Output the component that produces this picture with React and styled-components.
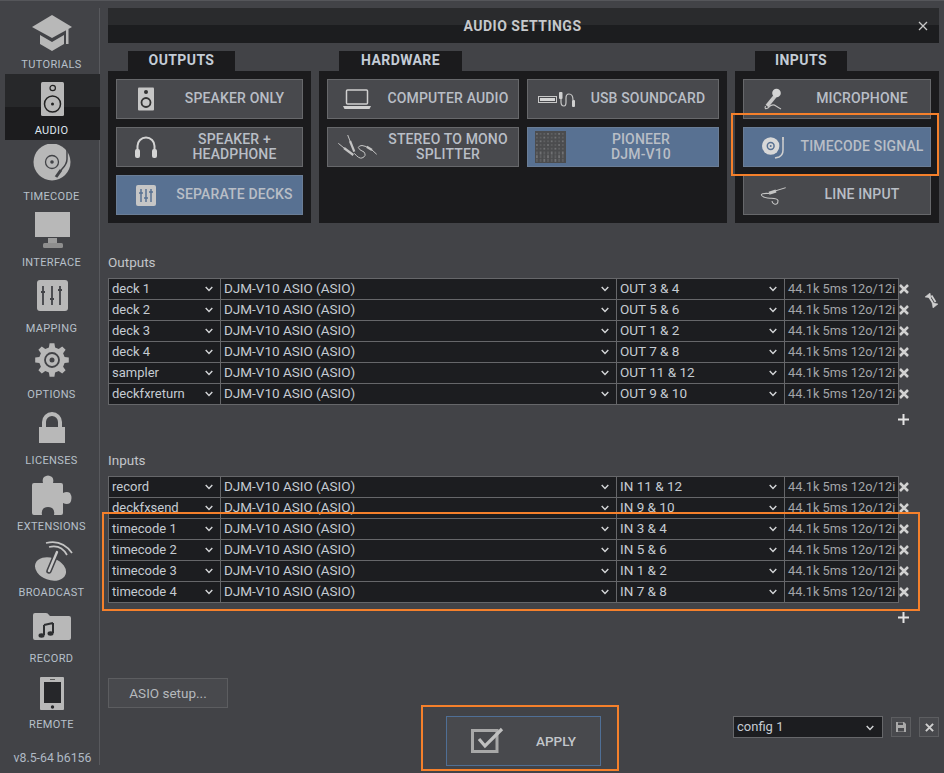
import React from "react";
import styled, { createGlobalStyle } from "styled-components";

const Global = createGlobalStyle`
  html, body { margin: 0; padding: 0; background: #424347; height: 773px; overflow: hidden; }
  body { font-family: Roboto, "Liberation Sans", sans-serif; }
  * { box-sizing: border-box; }
`;

const Page = styled.div`
  display: flex; width: 944px; height: 773px; background: #424347; border-top: 1px solid #55565a;
`;
const Sidebar = styled.nav`
  display: flex; flex-direction: column; width: 100px; height: 757px; margin-top: 7px; padding-left: 5px;
  border-right: 1px solid #58595d;
`;
const NavItem = styled.div`
  height: 66px; padding-top: 4px; margin-right: -1px; display: flex; flex-direction: column; align-items: center; flex: none;
  background: ${p => (p.$active ? "linear-gradient(#27282a 50%, #1c1c1e 50%)" : "transparent")};
`;
const NavIcon = styled.svg`
  width: 44px; height: 44px; flex: none; display: block; margin-left: -1px; fill: ${p => p.$c || "#b8b8b8"};
`;
const NavLabel = styled.span`
  font-size: 11px; line-height: 18px; color: ${p => (p.$active ? "#dfe6ee" : "#b7c0ca")}; margin-left: -2px; letter-spacing: .35px;
`;
const Version = styled.div`
  margin-top: auto; margin-left: 1px; text-align: center; font-size: 12.3px; line-height: 16px; color: #b0bac5; transform: translateY(1px);
`;
const Main = styled.main`
  margin-left: 8px; width: 831px; padding-top: 7px; display: flex; flex-direction: column;
`;
const TitleBar = styled.header`
  display: grid; grid-template-columns: 1fr auto 1fr; align-items: center; height: 35px;
  background: linear-gradient(#2a2b2d 50%, #1c1d1f 50%);
`;
const Title = styled.h1`
  grid-column: 2; margin: 0; font-size: 14px; font-weight: 700; color: #c6c8cb; letter-spacing: .5px; transform: translateX(-1px);
`;
const CloseWrap = styled.div`
  justify-self: end; padding-right: 11px; display: flex;
`;
const Panels = styled.section`
  display: grid; grid-template-columns: 203px 408px 204px; gap: 8px; margin-top: 8px;
`;
const Group = styled.div`
  position: relative;
`;
const Tab = styled.div`
  margin-left: 20px; width: ${p => p.$w}px; height: 20px; background: #1b1b1d; text-align: center;
  font-size: 14px; font-weight: 700; line-height: 18px; color: #c4ccd6; letter-spacing: .4px;
`;
const Panel = styled.div`
  display: grid; grid-template-columns: repeat(${p => p.$cols}, 1fr); grid-auto-rows: 40px; gap: 8px; padding: 8px;
  height: 152px; background: #1b1b1d;
`;
const Btn = styled.div`
  display: flex; align-items: center; height: 40px;
  background: ${p => (p.$on ? "#587192" : "#48494d")};
  border: 1px solid ${p => (p.$on ? "#6a7d96" : "#67686b")};
`;
const BtnSlot = styled.div`
  flex: none; width: ${p => p.$w || 50}px; padding-left: 7px; display: flex;
`;
const BtnIcon = styled.svg`
  flex: none; display: block; width: 44px; height: 36px; fill: #c6c6c6;
`;
const BtnLabel = styled.div`
  flex: 1; text-align: center; font-size: 14px; font-weight: 500; line-height: 15px; color: #b9bec6; letter-spacing: .15px;
  transform: translateY(${p => (p.$two ? 0 : -1)}px);
`;
const Mark = styled.div`
  position: absolute; border: 2px solid #f5802b; pointer-events: none;
  left: ${p => p.$l}px; top: ${p => p.$t}px; width: ${p => p.$w}px; height: ${p => p.$h}px;
`;
const Section = styled.section`
  position: relative; margin-top: ${p => p.$mt || 0}px;
`;
const SectionLabel = styled.div`
  font-size: 13.5px; line-height: 16px; color: #c2c5c9; margin-bottom: 8px;
`;
const TableBody = styled.div`
  display: flex; align-items: flex-start;
`;
const Table = styled.div`
  width: 810px;
`;
const Row = styled.div`
  display: grid; grid-template-columns: 112px 396px 168px 114px 20px; height: 21px;
`;
const Cell = styled.div`
  display: flex; align-items: center; justify-content: space-between; height: 22px; margin-right: -1px;
  background: #1c1d20; border: 1px solid #66676a;
  padding: 0 7px 2px 3px; line-height: 19px; white-space: nowrap; overflow: hidden;
  font-size: ${p => p.$size || 13.5}px;
  color: ${p => (p.$dim ? "#a3a5a8" : "#c5cbd2")};
`;
const Chevron = styled.svg`
  flex: none; width: 8px; height: 6px; margin-top: 2px; fill: none; stroke: #d4d6d8; stroke-width: 1.4;
`;
const RemoveBtn = styled.div`
  display: flex; align-items: center; height: 22px; padding-left: 1px;
`;
const Glyph = styled.svg`
  display: block; flex: none; width: ${p => p.$s || 10}px; height: ${p => p.$s || 10}px; fill: none;
  stroke: ${p => p.$c || "#d6d6d6"}; stroke-width: ${p => p.$sw || 2.2};
`;
const SwapIcon = styled.svg`
  flex: none; width: 14px; height: 15px; margin: 15px 0 0 7px; fill: #d0d0d0; stroke: #d0d0d0;
`;
const AddRow = styled.div`
  height: ${p => p.$h}px; padding: 10px 0 0 790px;
`;
const Footer = styled.footer`
  display: flex; align-items: flex-start;
`;
const SetupBtn = styled.div`
  width: 120px; height: 30px; padding-bottom: 1px; border: 1px solid #5c5d60; background: #48494d; color: #b6b9bd; font-size: 13.5px;
  display: flex; align-items: center; justify-content: center;
`;
const ApplyFrame = styled.div`
  margin: 27px 0 0 193px; width: 198px; height: 66px; border: 2px solid #f5802b; padding: 9px 16px 0 23px;
`;
const ApplyBtn = styled.div`
  display: flex; align-items: center; width: 155px; height: 50px; background: #48494d; border: 1px solid #4f6f96;
`;
const ApplyIcon = styled.svg`
  flex: none; width: 36px; height: 28px; margin-left: 24px; fill: none;
`;
const ApplyText = styled.span`
  margin-left: 29px; font-size: 13.5px; font-weight: 500; color: #c2c6cb;
`;
const Config = styled.div`
  margin: 38px 0 0 auto; display: flex; align-items: flex-start;
`;
const ConfigSelect = styled.div`
  width: 150px; height: 22px; display: flex; align-items: center; justify-content: space-between; background: #1c1d20;
  border: 1px solid #66676a; padding: 0 8px 1px 3px; font-size: 13px; color: #c5cbd2;
`;
const SquareBtn = styled.div`
  width: 20px; height: 20px; margin: 1px 0 0 8px; background: #48494d; border: 1px solid #5c5d60;
  display: flex; align-items: center; justify-content: center;
`;

const gearPath = () => {
  const cx = 22, cy = 18, n = 8, ro = 17, ri = 13;
  const pts = [];
  for (let i = 0; i < n; i++) {
    const a = (i * 2 * Math.PI) / n - Math.PI / 2;
    const d = Math.PI / n;
    [[ri, -d * 0.62], [ro, -d * 0.36], [ro, d * 0.36], [ri, d * 0.62]].forEach(([r, o]) =>
      pts.push(`${(cx + r * Math.cos(a + o)).toFixed(1)} ${(cy + r * Math.sin(a + o)).toFixed(1)}`));
  }
  return "M" + pts.join("L") + "Z";
};

const D = "#424347";
const navIcons = {
  cap: <>
    <path d="M22 3 42 15 22 26 2 15Z" />
    <path d="M10 23 22 30 34 23V32L22 39 10 32Z" />
    <path d="M36 17h2.500V32h-2.500z" />
  </>,
  speaker: <>
    <rect x="11" y="4" width="23" height="34" rx="1.500" />
    <circle cx="22.700" cy="10" r="2.700" fill="none" stroke="#222" strokeWidth="1.200" />
    <circle cx="22.500" cy="26" r="8" fill="none" stroke="#222" strokeWidth="1.500" />
    <circle cx="22.500" cy="26" r="1.500" fill="#222" />
  </>,
  disc: <>
    <circle cx="22" cy="18" r="18.500" />
    <circle cx="22" cy="18" r="6.500" fill="none" stroke={D} strokeWidth="1.300" />
    <circle cx="22" cy="18" r="1.800" fill={D} />
    <path d="M37 3V15Q37 20 32 25L28 30" fill="none" stroke={D} strokeWidth="1.500" />
    <path d="M26 33 31 26" fill="none" stroke={D} strokeWidth="3" />
  </>,
  monitor: <>
    <rect x="5" y="2" width="35" height="25" />
    <rect x="18" y="28" width="9" height="5" fill="#9c9c9c" />
    <rect x="13" y="33" width="20" height="5" rx="1.500" fill="#8e8e8e" />
  </>,
  sliders: <>
    <rect x="7" y="4" width="31" height="31" rx="3" />
    <path d="M13 10V29M22 10V29M30 10V29M11 16h4M20 23h4M28 14h4" fill="none" stroke={D} strokeWidth="1.800" />
  </>,
  gear: <>
    <path d={gearPath()} />
    <circle cx="22" cy="18" r="7" fill="none" stroke={D} strokeWidth="1.800" />
    <circle cx="22" cy="18" r="2.500" fill={D} />
  </>,
  lock: <>
    <path d="M14 20V14a8 8 0 0 1 16 0V20" fill="none" stroke="#b8b8b8" strokeWidth="4" />
    <rect x="9" y="19" width="26" height="16" />
  </>,
  puzzle: <path d="M2 11Q2 9 4 9H13Q12 5 14 3Q18 0 22 3Q24 5 23 9H31Q33 9 33 11V19Q37 17 40 19Q43 24 40 29Q37 31 33 29V39Q33 41 31 41H24Q25 36 22 34Q18 32 14 34Q11 36 12 41H4Q2 41 2 39Z" />,
  dish: <>
    <ellipse cx="20.500" cy="29" rx="16" ry="11" transform="rotate(20 20.500 29)" />
    <path d="M19 31 27 12" fill="none" stroke={D} strokeWidth="5.500" strokeLinecap="round" />
    <path d="M19 31 27 12" fill="none" stroke="#c8c8c8" strokeWidth="2.400" strokeLinecap="round" />
    <path d="M16 3Q32 -1 42 13M19 7Q31 4 37 15" fill="none" stroke="#c4c4c4" strokeWidth="1.700" />
  </>,
  folder: <>
    <path d="M3 9Q3 7 5 7H16Q18 7 19 9L20 10H39Q41 10 41 12V32Q41 34 39 34H5Q3 34 3 32Z" />
    <path d="M14 19V29M23 17V27M14 19 23 17" fill="none" stroke="#2e2f31" strokeWidth="2" />
    <ellipse cx="11.500" cy="29.500" rx="3" ry="2.200" fill="#2e2f31" />
    <ellipse cx="20.500" cy="27.500" rx="3" ry="2.200" fill="#2e2f31" />
  </>,
  tablet: <>
    <rect x="10" y="5" width="24" height="33" rx="1" />
    <rect x="14" y="10" width="17" height="21" fill="#26272a" />
    <circle cx="22.500" cy="35" r="1.700" fill="#26272a" />
    <rect x="20" y="7" width="5" height="1" fill="#5a5a5a" />
  </>,
};

const Mixer = () => {
  const dots = [];
  for (let r = 0; r < 8; r++) for (let c = 0; c < 8; c++)
    dots.push(<rect key={`${r}-${c}`} x={1 + c * 3.7} y={4 + r * 3.7} width="1.800" height={r > 4 ? 3 : 1.800} fill={(r + c) % 3 ? "#5e5f61" : "#707173"} />);
  return <><rect x="0" y="2" width="31" height="32" fill="#4b4c4e" />{dots}</>;
};

const btnIcons = {
  speaker: <>
    <rect x="14" y="6.500" width="16" height="23" rx="1" />
    <circle cx="22" cy="11" r="2" fill="#333" />
    <circle cx="22" cy="21.500" r="4.500" fill="none" stroke="#333" strokeWidth="1.800" />
  </>,
  phones: <>
    <path d="M13.500 23V17a8.500 8.500 0 0 1 17 0V23" fill="none" stroke="#d4d4d4" strokeWidth="2" />
    <rect x="11" y="20" width="5" height="9" rx="2" fill="#d4d4d4" />
    <rect x="28" y="20" width="5" height="9" rx="2" fill="#d4d4d4" />
  </>,
  sliders: <>
    <rect x="12" y="8" width="20" height="21" rx="2" />
    <path d="M17 12V25M22 12V25M27 12V25M15 16h4M20 21h4M25 15h4" fill="none" stroke="#587192" strokeWidth="1.500" />
  </>,
  laptop: <>
    <rect x="11.500" y="9" width="21" height="14" rx="1" fill="none" stroke="#d0d0d0" strokeWidth="1.500" />
    <path d="M8 25H36L34.500 28H9.500Z" fill="#d0d0d0" />
  </>,
  cables: <g fill="none" stroke="#c4c4c4">
    <path d="M3.300 14.300 9 19" strokeWidth="1" />
    <path d="M9 19 18.300 26" strokeWidth="2.200" />
    <path d="M12.700 6 15 12" strokeWidth="1" />
    <path d="M15 12 19.300 22.700" strokeWidth="2.200" />
    <path d="M19.300 24.300Q24 30 27 29Q32 27 29 23Q24 21 23.300 18.500Q24 16.500 27 16.500L31.700 17.700" strokeWidth="1" />
    <path d="M31.700 17.700 37 21" strokeWidth="2.200" />
    <path d="M37 21 41.700 25.300" strokeWidth="1" />
  </g>,
  usb: <>
    <rect x="3.500" y="15.500" width="18" height="6" fill="#48494d" stroke="#c8c8c8" strokeWidth="1" />
    <rect x="5" y="17" width="15" height="3" fill="#d4d4d4" />
    <rect x="24" y="11" width="3.500" height="7" rx="1" fill="#d0d0d0" />
    <rect x="37" y="19" width="3" height="7" rx="1" fill="#d0d0d0" />
    <path d="M26 18V21Q26 25 29 25Q31 25 31 21V17Q31 13 34 13Q38 13 38 19" fill="none" stroke="#c8c8c8" strokeWidth="1.200" />
  </>,
  mixer: <Mixer />,
  mic: <>
    <path d="M16 25 25 14" stroke="#c8c8c8" strokeWidth="3.600" fill="none" />
    <circle cx="25.500" cy="12" r="4.300" fill="#d4d4d4" />
    <path d="M14.500 25Q13 29 17 27Q21 22 25 25Q28 27 30 28" fill="none" stroke="#c4c4c4" strokeWidth="1.200" />
  </>,
  turntable: <>
    <circle cx="19.700" cy="17" r="8.700" fill="#d8d8d8" />
    <circle cx="19.700" cy="17" r="3.400" fill="none" stroke="#587192" strokeWidth="1.500" />
    <circle cx="19.700" cy="17" r="1" fill="#587192" />
    <path d="M32 9V21Q32 26 28 28L24 29" fill="none" stroke="#d0d0d0" strokeWidth="1.500" />
    <path d="M31 8h2v3h-2z" />
  </>,
  jack: <g fill="none" stroke="#c4c4c4">
    <path d="M24 14 34.700 10.700" strokeWidth="1" />
    <path d="M18 16.300 25 14" strokeWidth="3" />
    <path d="M18 16.500Q9 16 10.700 18.500Q13 21 19 21.300Q26 21 27 23.500Q27 28 23.300 27Q21 26 21 24" strokeWidth="1.100" />
  </g>,
};

const Nav = [
  ["TUTORIALS", "cap"], ["AUDIO", "speaker", true], ["TIMECODE", "disc"], ["INTERFACE", "monitor"], ["MAPPING", "sliders"],
  ["OPTIONS", "gear"], ["LICENSES", "lock"], ["EXTENSIONS", "puzzle"], ["BROADCAST", "dish"], ["RECORD", "folder"], ["REMOTE", "tablet"],
];

const outRows = [
  ["deck 1", "OUT 3 & 4"], ["deck 2", "OUT 5 & 6"], ["deck 3", "OUT 1 & 2"], ["deck 4", "OUT 7 & 8"],
  ["sampler", "OUT 11 & 12"], ["deckfxreturn", "OUT 9 & 10"],
];
const inRows = [
  ["record", "IN 11 & 12"], ["deckfxsend", "IN 9 & 10"], ["timecode 1", "IN 3 & 4"], ["timecode 2", "IN 5 & 6"],
  ["timecode 3", "IN 1 & 2"], ["timecode 4", "IN 7 & 8"],
];

const Chev = () => <Chevron viewBox="0 0 8 6"><path d="M.7 1 4 4.500 7.300 1" /></Chevron>;
const Cross = ({ s, c, sw }) => <Glyph viewBox="0 0 10 10" $s={s} $c={c} $sw={sw}><path d="M1 1 9 9M9 1 1 9" /></Glyph>;
const Plus = () => <Glyph viewBox="0 0 11 11" $s={11} $c="#e4e4e4" $sw={2}><path d="M5.500 0V11M0 5.500H11" /></Glyph>;

const DataTable = ({ rows }) => (
  <Table>
    {rows.map(([name, port]) => (
      <Row key={name}>
        <Cell $size={13}>{name}<Chev /></Cell>
        <Cell>DJM-V10 ASIO (ASIO)<Chev /></Cell>
        <Cell>{port}<Chev /></Cell>
        <Cell $dim $size={12.8}>44.1k 5ms 12o/12i</Cell>
        <RemoveBtn><Cross s={10} c="#d2d2d2" sw={2.5} /></RemoveBtn>
      </Row>
    ))}
  </Table>
);

const OutBtn = ({ icon, on, slot, two, children }) => (
  <Btn $on={on}>
    <BtnSlot $w={slot}><BtnIcon viewBox="0 0 44 36">{btnIcons[icon]}</BtnIcon></BtnSlot>
    <BtnLabel $two={two}>{children}</BtnLabel>
  </Btn>
);

export default function App() {
  return (
    <Page>
      <Global />
      <Sidebar>
        {Nav.map(([label, icon, active]) => (
          <NavItem key={label} $active={active}>
            <NavIcon viewBox="0 0 44 44">{navIcons[icon]}</NavIcon>
            <NavLabel $active={active}>{label}</NavLabel>
          </NavItem>
        ))}
        <Version>v8.5-64 b6156</Version>
      </Sidebar>
      <Main>
        <TitleBar>
          <Title>AUDIO SETTINGS</Title>
          <CloseWrap><Cross s={10} c="#c8c8c8" sw={1.300} /></CloseWrap>
        </TitleBar>
        <Panels>
          <Group>
            <Tab $w={107}>OUTPUTS</Tab>
            <Panel $cols={1}>
              <OutBtn icon="speaker">SPEAKER ONLY</OutBtn>
              <OutBtn icon="phones" two>SPEAKER +<br />HEADPHONE</OutBtn>
              <OutBtn icon="sliders" on>SEPARATE DECKS</OutBtn>
            </Panel>
          </Group>
          <Group>
            <Tab $w={123}>HARDWARE</Tab>
            <Panel $cols={2}>
              <OutBtn icon="laptop">COMPUTER AUDIO</OutBtn>
              <OutBtn icon="usb">USB SOUNDCARD</OutBtn>
              <OutBtn icon="cables" two>STEREO TO MONO<br />SPLITTER</OutBtn>
              <OutBtn icon="mixer" on slot={36} two>PIONEER<br />DJM-V10</OutBtn>
            </Panel>
          </Group>
          <Group>
            <Tab $w={92}>INPUTS</Tab>
            <Panel $cols={1}>
              <OutBtn icon="mic">MICROPHONE</OutBtn>
              <OutBtn icon="turntable" on>TIMECODE SIGNAL</OutBtn>
              <OutBtn icon="jack">LINE INPUT</OutBtn>
            </Panel>
            <Mark $l={-4} $t={62} $w={208} $h={63} />
          </Group>
        </Panels>
        <Section $mt={31}>
          <SectionLabel>Outputs</SectionLabel>
          <TableBody>
            <DataTable rows={outRows} />
            <SwapIcon viewBox="0 0 14 15">
              <path d="M0 4 5 0 6 5Z M8 15 13 11 7 9.500Z" strokeWidth=".5" />
              <path d="M3.500 3 8 10M6.500 2.500 10.500 9" fill="none" strokeWidth="1.800" />
            </SwapIcon>
          </TableBody>
          <AddRow $h={48}><Plus /></AddRow>
        </Section>
        <Section>
          <SectionLabel>Inputs</SectionLabel>
          <TableBody>
            <DataTable rows={inRows} />
          </TableBody>
          <AddRow $h={76}><Plus /></AddRow>
          <Mark $l={-6} $t={60} $w={818} $h={99} />
        </Section>
        <Footer>
          <SetupBtn>ASIO setup...</SetupBtn>
          <ApplyFrame>
            <ApplyBtn>
              <ApplyIcon viewBox="0 0 36 28">
                <path d="M1.500 3.500H26V24.500H1.500Z" stroke="#a8a8a8" strokeWidth="3" />
                <path d="M8 12 14 19 31 2" stroke="#c0c0c0" strokeWidth="3.200" />
              </ApplyIcon>
              <ApplyText>APPLY</ApplyText>
            </ApplyBtn>
          </ApplyFrame>
          <Config>
            <ConfigSelect>config 1<Chev /></ConfigSelect>
            <SquareBtn>
              <svg width="12" height="12" viewBox="0 0 12 12"><path d="M1 1H9L11 3V11H1Z" fill="#a9a9a9" /><path d="M3 1.500H8V4H3ZM3 7H9V10.500H3Z" fill="#48494d" /></svg>
            </SquareBtn>
            <SquareBtn><Cross s={9} c="#cfcfcf" sw={2.2} /></SquareBtn>
          </Config>
        </Footer>
      </Main>
    </Page>
  );
}
